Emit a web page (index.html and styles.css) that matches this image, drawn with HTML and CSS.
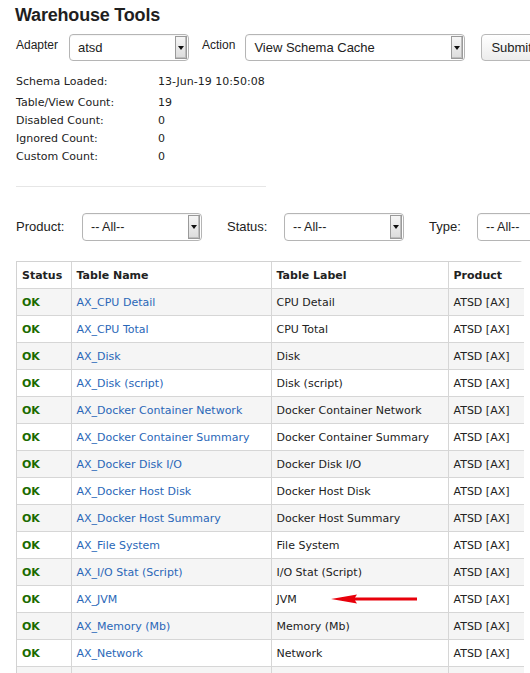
FILE: index.html
```html
<!DOCTYPE html>
<html>
<head>
<meta charset="utf-8">
<link rel="stylesheet" href="styles.css">
</head>
<body>
<div class="page">
  <h1 class="title">Warehouse Tools</h1>
  <div class="toolbar">
    <span class="lbl lbl-adapter">Adapter</span>
    <div class="sel sel-adapter"><span class="sel-text">atsd</span><span class="sel-arrow"></span></div>
    <span class="lbl lbl-action">Action</span>
    <div class="sel sel-action"><span class="sel-text">View Schema Cache</span><span class="sel-arrow"></span></div>
    <button class="btn">Submit</button>
  </div>

  <div class="info">
    <div class="info-row first"><span class="info-key">Schema Loaded:</span><span>13-Jun-19 10:50:08</span></div>
    <div class="info-row"><span class="info-key">Table/View Count:</span><span>19</span></div>
    <div class="info-row"><span class="info-key">Disabled Count:</span><span>0</span></div>
    <div class="info-row"><span class="info-key">Ignored Count:</span><span>0</span></div>
    <div class="info-row"><span class="info-key">Custom Count:</span><span>0</span></div>
  </div>
  <div class="rule"></div>

  <div class="filters">
    <span class="flbl">Product:</span>
    <div class="sel sel-filter"><span class="sel-text">-- All--</span><span class="sel-arrow"></span></div>
    <span class="flbl flbl-status">Status:</span>
    <div class="sel sel-filter"><span class="sel-text">-- All--</span><span class="sel-arrow"></span></div>
    <span class="flbl flbl-type">Type:</span>
    <div class="sel sel-filter"><span class="sel-text">-- All--</span><span class="sel-arrow"></span></div>
  </div>

  <div class="table-wrap">
    <table class="grid">
      <colgroup><col class="c1"><col class="c2"><col class="c3"><col class="c4"></colgroup>
      <thead>
        <tr><th>Status</th><th>Table Name</th><th>Table Label</th><th>Product</th></tr>
      </thead>
      <tbody>
        <tr><td class="ok">OK</td><td><a>AX_CPU Detail</a></td><td>CPU Detail</td><td>ATSD [AX]</td></tr>
        <tr><td class="ok">OK</td><td><a>AX_CPU Total</a></td><td>CPU Total</td><td>ATSD [AX]</td></tr>
        <tr><td class="ok">OK</td><td><a>AX_Disk</a></td><td>Disk</td><td>ATSD [AX]</td></tr>
        <tr><td class="ok">OK</td><td><a>AX_Disk (script)</a></td><td>Disk (script)</td><td>ATSD [AX]</td></tr>
        <tr><td class="ok">OK</td><td><a>AX_Docker Container Network</a></td><td>Docker Container Network</td><td>ATSD [AX]</td></tr>
        <tr><td class="ok">OK</td><td><a>AX_Docker Container Summary</a></td><td>Docker Container Summary</td><td>ATSD [AX]</td></tr>
        <tr><td class="ok">OK</td><td><a>AX_Docker Disk I/O</a></td><td>Docker Disk I/O</td><td>ATSD [AX]</td></tr>
        <tr><td class="ok">OK</td><td><a>AX_Docker Host Disk</a></td><td>Docker Host Disk</td><td>ATSD [AX]</td></tr>
        <tr><td class="ok">OK</td><td><a>AX_Docker Host Summary</a></td><td>Docker Host Summary</td><td>ATSD [AX]</td></tr>
        <tr><td class="ok">OK</td><td><a>AX_File System</a></td><td>File System</td><td>ATSD [AX]</td></tr>
        <tr><td class="ok">OK</td><td><a>AX_I/O Stat (Script)</a></td><td>I/O Stat (Script)</td><td>ATSD [AX]</td></tr>
        <tr><td class="ok">OK</td><td><a>AX_JVM</a></td><td class="jvm">JVM<svg class="arrow" width="90" height="12" viewBox="0 0 90 12"><polygon points="0,6 26,1.5 24,4.6 86,4.6 86,7.4 24,7.4 26,10.5" fill="#e8000b"/></svg></td><td>ATSD [AX]</td></tr>
        <tr><td class="ok">OK</td><td><a>AX_Memory (Mb)</a></td><td>Memory (Mb)</td><td>ATSD [AX]</td></tr>
        <tr><td class="ok">OK</td><td><a>AX_Network</a></td><td>Network</td><td>ATSD [AX]</td></tr>
        <tr><td class="ok">OK</td><td><a>AX_Process</a></td><td>Process</td><td>ATSD [AX]</td></tr>
      </tbody>
    </table>
  </div>
</div>
</body>
</html>
```
FILE: styles.css
```css
html, body {
  margin: 0;
  padding: 0;
  background: #ffffff;
  overflow: hidden;
}
.page {
  width: 600px;
  padding: 3px 0 0 16px;
  color: #222;
  font-family: "DejaVu Sans", Verdana, sans-serif;
  font-size: 11px;
}
.title {
  margin: 0 0 0 -1px;
  font-family: "Liberation Sans", Arial, sans-serif;
  font-weight: bold;
  font-size: 18px;
  letter-spacing: -0.2px;
  line-height: 24px;
  color: #1f1f1f;
}
.toolbar {
  display: flex;
  align-items: center;
  margin-top: 6px;
  height: 28px;
}
.lbl {
  font-family: "Liberation Sans", Arial, sans-serif;
  font-size: 12px;
  color: #222;
  margin-top: -4px;
}
.lbl-adapter { margin-right: 11px; }
.lbl-action { margin-left: 13px; margin-right: 10px; }

.sel {
  position: relative;
  box-sizing: border-box;
  height: 27px;
  border: 1px solid #b5b5b5;
  border-radius: 4px;
  background: #fff;
  display: flex;
  align-items: center;
  font-family: "Liberation Sans", Arial, sans-serif;
  font-size: 13px;
  color: #222;
  box-shadow: inset 0 1px 1px rgba(0,0,0,0.04);
}
.sel-text { padding-left: 8px; flex: 1; }
.sel-arrow {
  position: relative;
  width: 12px;
  height: 23px;
  margin-right: 1px;
  border: 1px solid #9a9a9a;
  box-sizing: border-box;
  background: linear-gradient(#f6f6f6, #dcdcdc);
  box-shadow: inset -1px -1px 0 #bdbdbd;
}
.sel-arrow::after {
  content: "";
  position: absolute;
  left: 2px;
  top: 9px;
  border-left: 3px solid transparent;
  border-right: 3px solid transparent;
  border-top: 4px solid #111;
}
.sel-adapter { width: 120px; }
.sel-action { width: 220px; }
.sel-filter { width: 120px; height: 28px; }
.sel-filter .sel-arrow { height: 24px; }
.sel-filter .sel-text { font-size: 12.5px; }

.btn {
  margin-left: 16px;
  height: 27px;
  width: 80px;
  box-sizing: border-box;
  border: 1px solid #b8b8b8;
  border-radius: 4px;
  background: linear-gradient(#ffffff, #ececec);
  font-family: "Liberation Sans", Arial, sans-serif;
  font-size: 13px;
  color: #222;
  text-align: left;
  padding-left: 9px;
}

.info {
  margin-top: 13px;
  color: #222;
}
.info-row {
  display: flex;
  height: 18px;
  line-height: 18px;
}
.info-row.first { height: 20px; line-height: 16px; }
.info-key { width: 142px; }
.rule {
  width: 250px;
  height: 1px;
  background: #e6e6e6;
  margin-top: 20px;
}

.filters {
  display: flex;
  align-items: center;
  margin-top: 26px;
  height: 28px;
}
.flbl {
  font-family: "Liberation Sans", Arial, sans-serif;
  font-size: 13px;
  color: #222;
  width: 66px;
  margin-top: -1px;
}
.flbl-status { margin-left: 25px; width: 57px; }
.flbl-type { margin-left: 25px; width: 48px; }

.table-wrap {
  margin-top: 20px;
  width: 507px;
  border: 1px solid #d2d2d2;
  border-radius: 0 4px 0 0;
  border-bottom: none;
  box-sizing: border-box;
}
.grid {
  width: 100%;
  border-collapse: collapse;
  table-layout: fixed;
}
.c1 { width: 54px; }
.c2 { width: 200px; }
.c3 { width: 177px; }
.c4 { width: 76px; }
.grid th, .grid td {
  height: 26px;
  padding: 0 0 0 5px;
  border: 1px solid #d6d6d6;
  text-align: left;
  white-space: nowrap;
  overflow: visible;
  color: #222;
}
.grid tr:first-child th { border-top: none; }
.grid th:first-child, .grid td:first-child { border-left: none; }
.grid th:last-child, .grid td:last-child { border-right: none; }
.grid th {
  font-weight: bold;
  background: #fff;
}
.grid tbody tr:nth-child(odd) td { background: #f5f5f5; }
.grid tbody tr:nth-child(even) td { background: #fff; }
.grid td.ok {
  color: #1a6b00;
  font-weight: bold;
}
.grid a {
  color: #2a67b8;
  text-decoration: none;
}
.jvm { position: relative; }
.arrow {
  position: absolute;
  left: 59px;
  top: 7px;
}
```
